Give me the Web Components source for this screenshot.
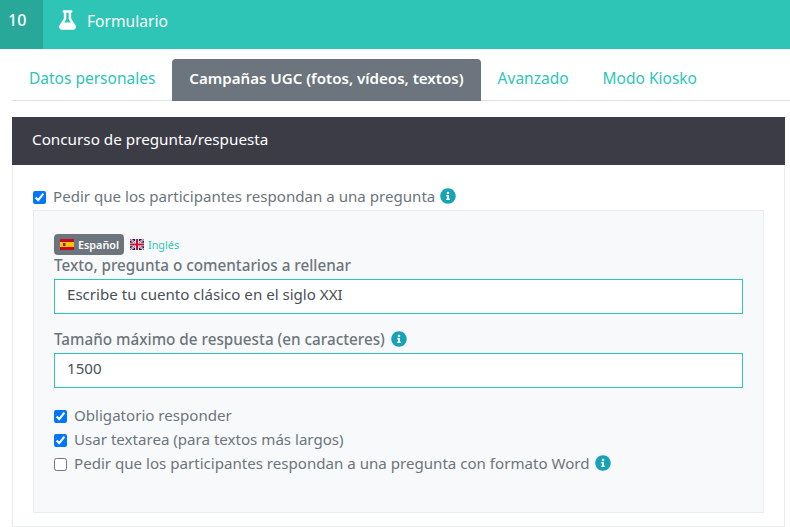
<!DOCTYPE html>
<html lang="es">
<head>
<meta charset="utf-8">
<title>Formulario</title>
<style>
  html, body { margin: 0; padding: 0; background: #fff; }
  body { width: 790px; height: 527px; overflow: hidden; font-family: "Noto Sans", "Liberation Sans", sans-serif; font-size: 15.1px; color: #6c757d; }
</style>
</head>
<body>
<top-bar count="10">Formulario</top-bar>
<tab-bar>
  <tab-item>Datos personales</tab-item>
  <tab-item active>Campañas UGC (fotos, vídeos, textos)</tab-item>
  <tab-item>Avanzado</tab-item>
  <tab-item>Modo Kiosko</tab-item>
</tab-bar>
<form-card heading="Concurso de pregunta/respuesta">
  <check-row checked info>Pedir que los participantes respondan a una pregunta</check-row>
  <sub-panel>
    <lang-switch></lang-switch>
    <text-field label="Texto, pregunta o comentarios a rellenar" value="Escribe tu cuento clásico en el siglo XXI"></text-field>
    <text-field class="second" label="Tamaño máximo de respuesta (en caracteres)" value="1500" info></text-field>
    <div style="height:15px"></div>
    <check-row checked>Obligatorio responder</check-row>
    <check-row checked>Usar textarea (para textos más largos)</check-row>
    <check-row info>Pedir que los participantes respondan a una pregunta con formato Word</check-row>
  </sub-panel>
</form-card>

<script>
const FLASK = 'M437.2 403.5L320 215V64h8c13.3 0 24-10.7 24-24V24c0-13.3-10.7-24-24-24H120c-13.3 0-24 10.7-24 24v16c0 13.3 10.7 24 24 24h8v151L10.8 403.5C-18.5 450.6 15.2 512 70.9 512h306.2c55.8 0 89.4-61.5 60.1-108.5zM137.9 320l48.2-77.6c3.7-5.2 5.8-11.6 5.8-18.4V64h64v160c0 6.9 2.2 13.2 5.8 18.4l48.2 77.6h-172z';
const INFO = 'M256 8C119.043 8 8 119.083 8 256c0 136.997 111.043 248 248 248s248-111.003 248-248C504 119.083 392.957 8 256 8zm0 110c23.196 0 42 18.804 42 42s-18.804 42-42 42-42-18.804-42-42 18.804-42 42-42zm56 254c0 6.627-5.373 12-12 12h-88c-6.627 0-12-5.373-12-12v-24c0-6.627 5.373-12 12-12h12v-64h-12c-6.627 0-12-5.373-12-12v-24c0-6.627 5.373-12 12-12h64c6.627 0 12 5.373 12 12v100h12c6.627 0 12 5.373 12 12v24z';
const infoSvg = `<svg class="info" width="16" height="16" viewBox="0 0 512 512"><path fill="#17a2b8" d="${INFO}"/></svg>`;

class TopBar extends HTMLElement {
  connectedCallback() {
    this.attachShadow({ mode: 'open' }).innerHTML = `
      <style>
        :host { display: flex; height: 49px; background: #2ec5b6; color: #fff; font-size: 15.6px; }
        .count { width: 43px; background: #27a898; display: flex; align-items: center; padding: 0 0 9px 8px; box-sizing: border-box; font-size: 16px; font-weight: 500; }
        .title { display: flex; align-items: center; gap: 11px; padding: 0 0 9px 16px; }
        .title span { margin-top: 2px; }
      </style>
      <div class="count">${this.getAttribute('count')}</div>
      <div class="title">
        <svg width="17" height="20" viewBox="0 0 448 512"><path fill="#fff" d="${FLASK}"/></svg>
        <span><slot></slot></span>
      </div>`;
  }
}

class TabBar extends HTMLElement {
  connectedCallback() {
    this.attachShadow({ mode: 'open' }).innerHTML = `
      <style>
        :host { display: flex; margin: 10px 0 0 12px; height: 42px; box-sizing: border-box; border-bottom: 1px solid #dee2e6; }
      </style>
      <slot></slot>`;
  }
}

class TabItem extends HTMLElement {
  connectedCallback() {
    this.attachShadow({ mode: 'open' }).innerHTML = `
      <style>
        :host { display: flex; align-items: center; height: 42px; padding: 0 17px 4px; box-sizing: border-box; color: #2ec5b6; font-size: 15.5px; border-radius: 4px 4px 0 0; white-space: nowrap; }
        :host([active]) { background: #6c757d; color: #fff; font-size: 15.1px; font-weight: 600; }
      </style>
      <slot></slot>`;
  }
}

class FormCard extends HTMLElement {
  connectedCallback() {
    this.attachShadow({ mode: 'open' }).innerHTML = `
      <style>
        :host { display: block; margin: 16px 5px 0 12px; border: 1px solid #e9ecef; border-top: 0; height: 410px; box-sizing: border-box; }
        .head { margin: 0 -1px; height: 48px; box-sizing: border-box; background: #3c3c46; color: #fff; display: flex; align-items: center; padding: 0 20px 4px; font-size: 15.25px; }
        .body { padding: 19px 20px 0; }
      </style>
      <div class="head">${this.getAttribute('heading')}</div>
      <div class="body"><slot></slot></div>`;
  }
}

class CheckRow extends HTMLElement {
  connectedCallback() {
    const checked = this.hasAttribute('checked') ? 'checked' : '';
    this.attachShadow({ mode: 'open' }).innerHTML = `
      <style>
        :host { display: flex; align-items: center; height: 24px; color: #6c757d; white-space: nowrap; }
        input { width: 13px; height: 13px; margin: 2px 7px 0 0; }
        .info { margin-left: 5px; }
      </style>
      <input type="checkbox" ${checked}>
      <span><slot></slot></span>
      ${this.hasAttribute('info') ? infoSvg : ''}`;
  }
}

class SubPanel extends HTMLElement {
  connectedCallback() {
    this.attachShadow({ mode: 'open' }).innerHTML = `
      <style>
        :host { display: block; margin-top: 2px; height: 303px; box-sizing: border-box; width: 731px; background: #f8f9fa; border: 1px solid #e9ecef; padding: 23px 20px 0; }
      </style>
      <slot></slot>`;
  }
}

class LangSwitch extends HTMLElement {
  connectedCallback() {
    this.attachShadow({ mode: 'open' }).innerHTML = `
      <style>
        :host { display: flex; align-items: center; gap: 6px; height: 21px; font-size: 10.8px; }
        .on { display: flex; align-items: center; gap: 4px; height: 21px; padding: 0 5px 0 6px; background: #6c757d; color: #fff; border-radius: 4px; font-weight: 600; }
        .off { display: flex; align-items: center; gap: 4px; color: #2ec5b6; }
        svg { display: block; }
      </style>
      <span class="on">
        <svg width="14" height="11" viewBox="0 0 14 11"><rect width="14" height="11" fill="#c60b1e"/><rect y="3" width="14" height="5" fill="#ffc400"/><rect x="3" y="4" width="2.5" height="3" fill="#ad1519"/></svg>
        Español
      </span>
      <span class="off">
        <svg width="14" height="11" viewBox="0 0 14 11"><rect width="14" height="11" fill="#012169"/><path d="M0 0L14 11M14 0L0 11" stroke="#fff" stroke-width="2"/><path d="M0 0L14 11M14 0L0 11" stroke="#c8102e" stroke-width=".8"/><path d="M7 0V11M0 5.5H14" stroke="#fff" stroke-width="3.6"/><path d="M7 0V11M0 5.5H14" stroke="#c8102e" stroke-width="2"/></svg>
        Inglés
      </span>`;
  }
}

class TextField extends HTMLElement {
  connectedCallback() {
    this.attachShadow({ mode: 'open' }).innerHTML = `
      <style>
        :host { display: block; }
        :host(.second) { margin-top: 15px; }
        .lab { display: flex; align-items: center; gap: 6px; height: 24px; box-sizing: border-box; padding-bottom: 4px; color: #6c757d; font-size: 15.25px; font-weight: 500; white-space: nowrap; }
        .box { height: 35px; box-sizing: border-box; border: 1px solid #2ec5b6; background: #fff; color: #495057; display: flex; align-items: center; padding: 0 12px 6px; }
      </style>
      <div class="lab">${this.getAttribute('label')}${this.hasAttribute('info') ? infoSvg : ''}</div>
      <div class="box">${this.getAttribute('value')}</div>`;
  }
}

customElements.define('top-bar', TopBar);
customElements.define('tab-bar', TabBar);
customElements.define('tab-item', TabItem);
customElements.define('form-card', FormCard);
customElements.define('check-row', CheckRow);
customElements.define('sub-panel', SubPanel);
customElements.define('lang-switch', LangSwitch);
customElements.define('text-field', TextField);
</script>
</body>
</html>
